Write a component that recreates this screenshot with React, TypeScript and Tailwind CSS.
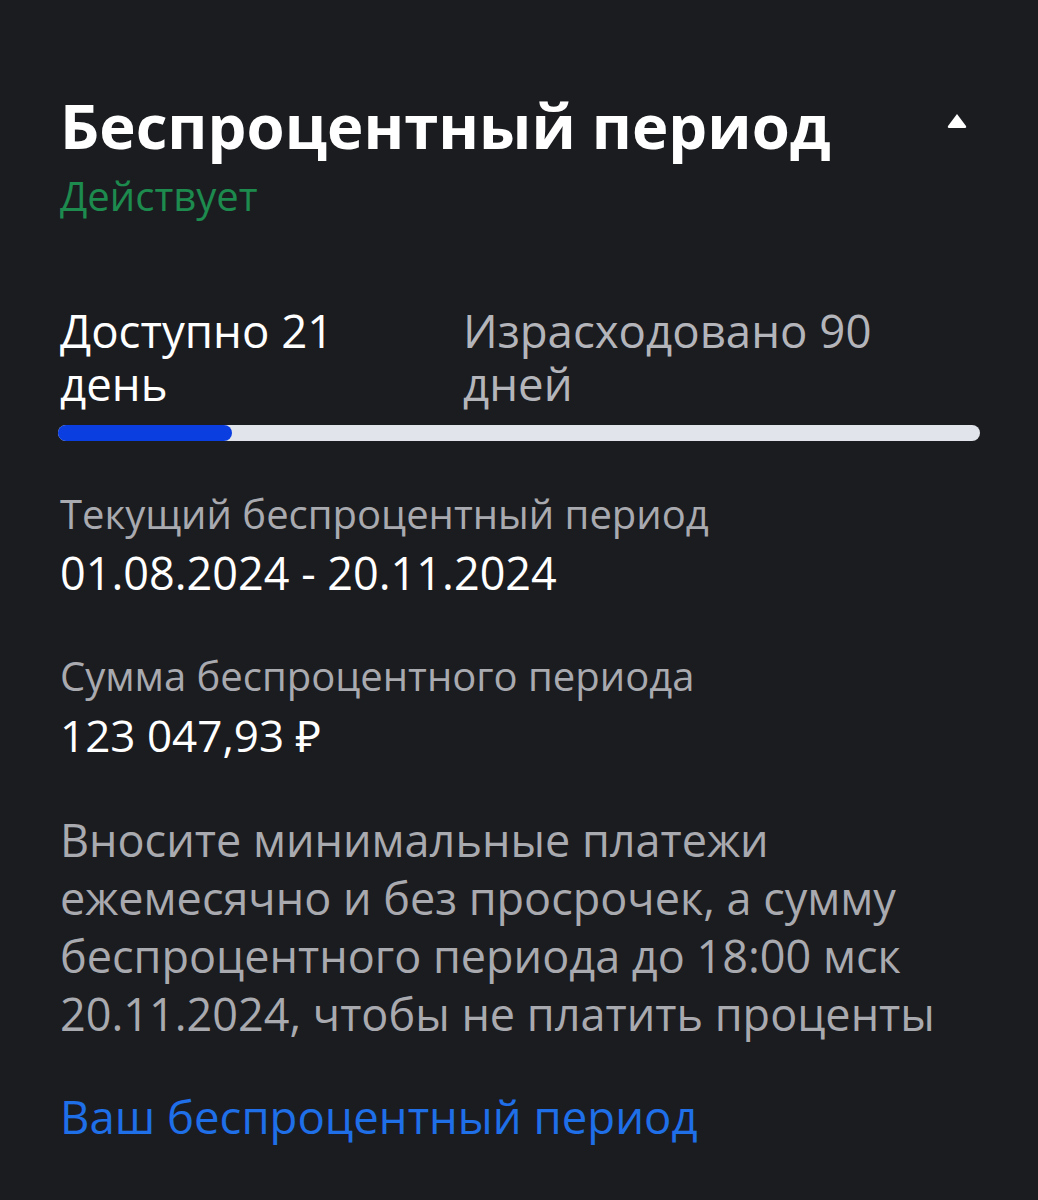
import React from 'react';

export default function App() {
  return (
    <div
      className="min-h-[1200px] w-[1038px] bg-[#1b1c20] px-[60px] pt-[89px]"
      style={{ fontFamily: '"Open Sans", "Noto Sans", sans-serif' }}
    >
      {/* Заголовок */}
      <div className="flex items-start justify-between">
        <h1 className="text-[61.6px] font-bold leading-[72px] text-white">Беспроцентный период</h1>
        <svg width="22" height="16" viewBox="0 0 22 16" className="mr-[10px] mt-[24px]">
          <path d="M11 1 L20 13 Q21 15 18 15 L4 15 Q1 15 2 13 Z" fill="#fff" />
        </svg>
      </div>
      <div className="mt-[11px] text-[40px] leading-[48px] text-[#1d8a4e]">Действует</div>

      {/* Дни */}
      <div className="mt-[84px] grid grid-cols-[403px_1fr] text-[45.6px] leading-[53px]">
        <div className="max-w-[330px] text-white">Доступно 21 день</div>
        <div className="max-w-[460px] text-[#b4b5ba]">Израсходовано 90 дней</div>
      </div>
      <div className="mx-[-2px] mt-[15px] h-[16px] rounded-full bg-[#e1e5eb]">
        <div className="h-full w-[174px] rounded-full bg-[#0a3ee0]" />
      </div>

      {/* Текущий период */}
      <div className="mt-[48px] text-[40px] leading-[50px] text-[#a9aaaf]">Текущий беспроцентный период</div>
      <div className="mt-[7px] text-[45px] leading-[54px] text-white">01.08.2024 - 20.11.2024</div>

      <div className="mt-[51px] text-[40px] leading-[50px] text-[#a9aaaf]">Сумма беспроцентного периода</div>
      <div className="mt-[7px] text-[44px] leading-[54px] text-white">123 047,93 ₽</div>

      <p className="mt-[49px] text-[45px] leading-[58px] text-[#a9aaaf]">
        Вносите минимальные платежи ежемесячно и без просрочек, а сумму беспроцентного периода до 18:00 мск 20.11.2024, чтобы не платить проценты
      </p>

      <div className="mt-[46px] text-[45.5px] leading-[54px] text-[#1f6fe8]">Ваш беспроцентный период</div>
    </div>
  );
}
